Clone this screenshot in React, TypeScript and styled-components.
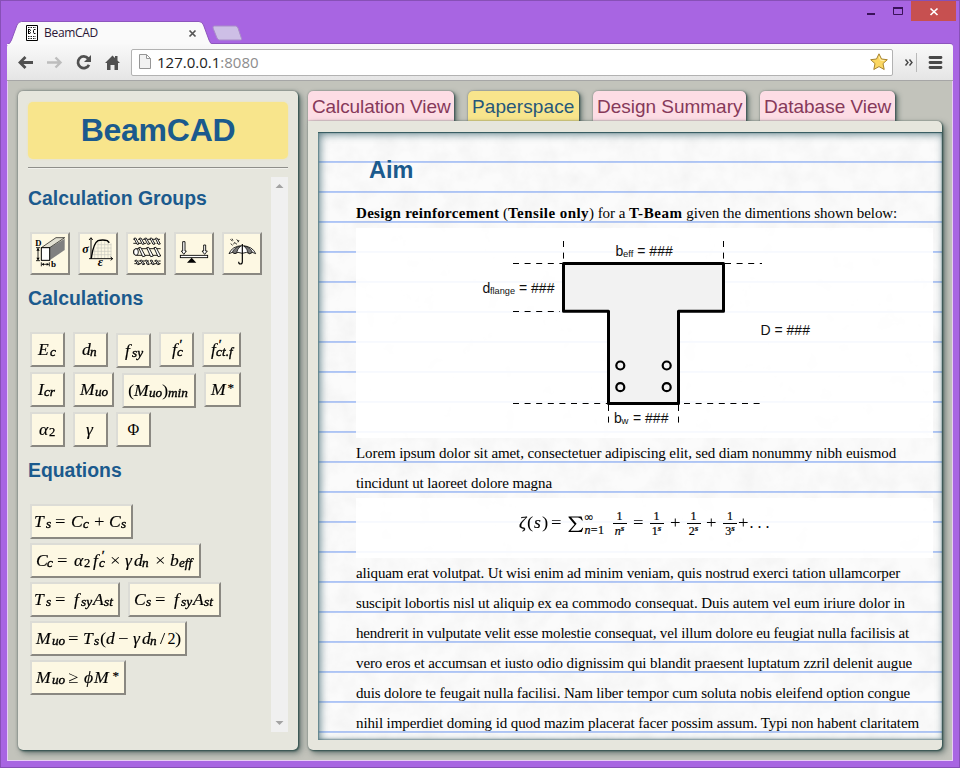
import React from "react";
import styled, { createGlobalStyle, css } from "styled-components";

const GlobalStyle = createGlobalStyle`
  html, body { margin: 0; padding: 0; }
  body { overflow: hidden; }
  *, *::before, *::after { box-sizing: border-box; }
`;

const serif = '"Liberation Serif", "Times New Roman", serif';
const sans = '"Liberation Sans", Arial, sans-serif';
const ui = '"Open Sans", "Noto Sans", sans-serif';

/* ---------- browser window ---------- */

const Window = styled.div`
  display: flex;
  flex-direction: column;
  width: 960px;
  height: 768px;
  padding: 0 7px 7px;
  background: #a865e2;
  box-shadow: inset 0 0 0 1px #8750b6;
`;

const TitleBar = styled.div`
  display: flex;
  justify-content: space-between;
  flex: none;
  height: 44px;
`;

const TabStrip = styled.div`
  display: flex;
  padding-top: 20px;
`;

const BrowserTab = styled.div`
  display: flex;
  align-items: center;
  position: relative;
  width: 206px;
  height: 25px;
  padding: 1px 16px 0 19px;
`;

const TabShape = styled.svg`
  position: absolute;
  left: 0;
  top: 0;
`;

const Favicon = styled.svg`
  position: relative;
  flex: none;
`;

const TabTitle = styled.span`
  position: relative;
  flex: 1;
  margin-left: 6px;
  font: 12px/16px ${ui};
  letter-spacing: -0.3px;
  color: #2a1636;
`;

const TabClose = styled.svg`
  position: relative;
  flex: none;
`;

const NewTab = styled.svg`
  flex: none;
  margin-left: -2px;
  margin-top: 4px;
`;

const Controls = styled.div`
  display: flex;
  margin-right: -3px;
  padding-top: 1px;
`;

const ControlIcon = styled.svg`
  display: block;
`;

const CloseBox = styled.div`
  width: 45px;
  height: 20px;
  background: #c75050;
`;

const Toolbar = styled.div`
  display: flex;
  align-items: center;
  flex: none;
  height: 37px;
  border-bottom: 1px solid #a6a6a6;
  border-radius: 3px 3px 0 0;
  background: linear-gradient(#f9f9f9, #e5e5e5);
  box-shadow: 0 -1px 0 #8d55bd;
`;

const NavIcons = styled.svg`
  flex: none;
`;

const AddressBar = styled.div`
  display: flex;
  align-items: center;
  width: 762px;
  height: 27px;
  padding: 0 4px 0 7px;
  border: 1px solid #b2b2b2;
  border-radius: 2px;
  background: #fff;
`;

const Address = styled.span`
  flex: 1;
  margin-left: 6px;
  font: 15px/20px ${ui};
  color: #222;
`;

const Port = styled.span`
  color: #8d8d8d;
`;

/* ---------- page ---------- */

const Page = styled.main`
  display: flex;
  flex: 1;
  min-height: 0;
  padding: 10px 10px 10px 10px;
  gap: 10px;
  border: solid #e8cdf6;
  border-width: 0 1px 1px;
  background: #c2c3bb;
`;

const panel = css`
  background: #e6e6dd;
  box-shadow: 1px 1px 2px #2f4f4c, 3px 3px 6px rgba(35, 60, 58, 0.6), 0 0 3px rgba(50, 60, 60, 0.5);
`;

const Sidebar = styled.aside`
  display: flex;
  flex-direction: column;
  width: 280px;
  height: 659px;
  padding: 10px;
  border-radius: 5px;
  ${panel}
`;

const Brand = styled.h1`
  margin: 1px 0 0;
  height: 57px;
  border-radius: 5px;
  background: #f8e58c;
  box-shadow: 0 0 2px rgba(248, 229, 140, 0.7);
  color: #1b5a8d;
  font: bold 32px/57px ${sans};
  letter-spacing: -0.25px;
  text-align: center;
`;

const Rule = styled.div`
  margin-top: 8px;
  height: 2px;
  border-top: 1px solid #8f8f8a;
  border-bottom: 1px solid #f1f1ec;
`;

const Scroller = styled.div`
  display: flex;
  margin-top: 8px;
  height: 555px;
`;

const ScrollContent = styled.div`
  flex: 1;
  padding-top: 9px;
`;

const ScrollTrack = styled.div`
  display: flex;
  flex-direction: column;
  justify-content: space-between;
  width: 17px;
  background: #f0f0f0;
`;

const SectionTitle = styled.h2`
  margin: 0 0 22px;
  color: #1b5a8d;
  font: bold 19.4px/24px ${sans};
`;

const Rows = styled.div<{ $gap: number }>`
  display: flex;
  flex-direction: column;
  gap: ${(p) => p.$gap}px;
  margin: 0 0 11px 2px;
`;

const Row = styled.div`
  display: flex;
  gap: 8px;
`;

const KeyButton = styled.button<{ $w: number; $h?: number; $drop?: boolean }>`
  display: flex;
  flex: none;
  width: ${(p) => p.$w}px;
  height: ${(p) => p.$h ?? 35}px;
  margin: 0 0 ${(p) => (p.$drop ? -1 : 0)}px;
  padding: 0;
  transform: translateY(${(p) => (p.$drop ? 1 : 0)}px);
  border: 2px solid;
  border-color: #dcdcd6 #8a8881 #8a8881 #dcdcd6;
  background: #fdf8e3;
  color: #000;
  overflow: hidden;
`;

/* ---------- formulas ---------- */

type Kind = "v" | "r" | "s" | "n" | "p" | "a" | "x";
type Piece = [string, Kind, number];

const glyphKinds = {
  v: css`font: italic 16px/30px ${serif}; -webkit-text-stroke: 0.15px #000; transform: scaleX(1.1);`,
  r: css`font: 16px/30px ${serif};`,
  x: css`font: 17px/30px ${serif}; transform: scaleX(1.1);`,
  s: css`font: italic 11.5px/35px ${serif}; -webkit-text-stroke: 0.35px #000; transform: scaleX(1.15);`,
  n: css`font: 11.5px/35px ${serif}; -webkit-text-stroke: 0.25px #000; transform: scaleX(1.1);`,
  p: css`font: italic 13px/18px ${serif}; -webkit-text-stroke: 0.4px #000;`,
  a: css`font: 13px/26px ${serif}; -webkit-text-stroke: 0.2px #000;`,
};

const Formula = styled.span<{ $start: number; $dy?: number }>`
  display: flex;
  align-items: flex-start;
  margin-left: ${(p) => p.$start - 2}px;
  margin-top: ${(p) => p.$dy ?? 0}px;
`;

const Glyph = styled.span<{ $kind: Kind; $w: number }>`
  display: block;
  flex: none;
  width: ${(p) => p.$w}px;
  white-space: nowrap;
  transform-origin: left center;
  text-align: left;
  ${(p) => glyphKinds[p.$kind]}
`;

function MathText({ pieces, dy }: { pieces: Piece[]; dy?: number }) {
  return (
    <Formula $start={pieces[0][2]} $dy={dy}>
      {pieces.map(([text, kind, x], i) => (
        <Glyph key={i} $kind={kind} $w={i + 1 < pieces.length ? pieces[i + 1][2] - x : 10}>
          {text}
        </Glyph>
      ))}
    </Formula>
  );
}

type Key = { w: number; drop?: boolean; pieces: Piece[] };

const calculations: Key[][] = [
  [
    { w: 35, pieces: [["E", "v", 7.5], ["c", "s", 19.5]] },
    { w: 35, pieces: [["d", "v", 8.5], ["n", "s", 17]] },
    { w: 35, drop: true, pieces: [["f", "v", 8.5], ["sy", "s", 15.5]] },
    { w: 35, pieces: [["f", "v", 12.5], ["c", "s", 17.5], ["′", "p", 19.8]] },
    { w: 39, pieces: [["f", "v", 8.5], ["c", "s", 14], ["′", "p", 16], ["t.f", "s", 20]] },
  ],
  [
    { w: 35, pieces: [["I", "v", 7.7], ["cr", "s", 14.3]] },
    { w: 41, pieces: [["M", "v", 6.5], ["uo", "s", 22.3]] },
    { w: 74, drop: true, pieces: [["(", "x", 5.5], ["M", "v", 11.5], ["uo", "s", 27.3], [")", "x", 40], ["min", "s", 46.3]] },
    { w: 37, pieces: [["M", "v", 6.5], ["*", "a", 23.5]] },
  ],
  [
    { w: 35, pieces: [["α", "v", 8.5], ["2", "n", 18.5]] },
    { w: 35, pieces: [["γ", "v", 13]] },
    { w: 35, pieces: [["Φ", "r", 11.5]] },
  ],
];

const equations: Key[][] = [
  [{ w: 103, pieces: [["T", "v", 4], ["s", "s", 15.5], ["=", "x", 25], ["C", "v", 41], ["c", "s", 52.5], ["+", "x", 63.5], ["C", "v", 79], ["s", "s", 91]] }],
  [{ w: 171, pieces: [["C", "v", 5.5], ["c", "s", 17], ["=", "x", 27], ["α", "v", 43.5], ["2", "n", 53.5], ["f", "v", 63], ["c", "s", 68.5], ["′", "p", 71], ["×", "x", 80], ["γ", "v", 95], ["d", "v", 103.5], ["n", "s", 112], ["×", "x", 125], ["b", "v", 140], ["eff", "s", 149]] }],
  [
    { w: 90, pieces: [["T", "v", 4], ["s", "s", 15.5], ["=", "x", 25], ["f", "v", 43.5], ["sy", "s", 50.5], ["A", "v", 62.5], ["st", "s", 74]] },
    { w: 93, pieces: [["C", "v", 6], ["s", "s", 17.5], ["=", "x", 27], ["f", "v", 45.5], ["sy", "s", 52.5], ["A", "v", 64.5], ["st", "s", 76]] },
  ],
  [{ w: 157, pieces: [["M", "v", 6], ["uo", "s", 21.8], ["=", "x", 38], ["T", "v", 53], ["s", "s", 64.5], ["(", "x", 70], ["d", "v", 76.5], ["−", "x", 88.5], ["γ", "v", 103], ["d", "v", 112], ["n", "s", 120.5], ["/", "x", 130.5], ["2", "r", 137.5], [")", "x", 145.5]] }],
  [{ w: 96, pieces: [["M", "v", 6], ["uo", "s", 21.8], ["≥", "x", 38.5], ["ϕ", "v", 54], ["M", "v", 64.5], ["*", "a", 82.5]] }],
];

function KeyRows({ rows, gap }: { rows: Key[][]; gap: number }) {
  return (
    <Rows $gap={gap}>
      {rows.map((row, i) => (
        <Row key={i}>
          {row.map((k, j) => (
            <KeyButton key={j} $w={k.w} $drop={k.drop}>
              <MathText pieces={k.pieces} dy={1} />
            </KeyButton>
          ))}
        </Row>
      ))}
    </Rows>
  );
}

/* ---------- group icons ---------- */

const GroupIcon = styled.svg`
  display: block;
  flex: none;
  margin: -2px;
`;

const SectionIcon = () => (
  <GroupIcon width="40" height="43" viewBox="30 156 120 129">
    <path d="M89 203L134 176V210L89 241Z" fill="#808080" />
    <path d="M64 203L108 173H134L89 203Z" fill="#e2e0d2" stroke="#000" strokeWidth="2" />
    <rect x="64" y="203" width="25" height="38" fill="#fff" stroke="#000" strokeWidth="3" />
    <path d="M54 204V241M48 203H60M48 242H60M64 247V259M88 247V259M66 253H86" stroke="#000" strokeWidth="2.5" />
    <path d="M54 204l-5 8h10zM54 241l-5-8h10zM65 253l7-4v8zM87 253l-7-4v8z" />
    <text x="46" y="199" fontFamily={serif} fontSize="26" fontWeight="bold">D</text>
    <text x="93" y="261" fontFamily={serif} fontSize="27" fontWeight="bold">b</text>
  </GroupIcon>
);

const StressIcon = () => (
  <GroupIcon width="40" height="43" viewBox="174 156 120 129">
    <path d="M222 214H274M217 224H274M228 204H274M232 194H274M234 184V235M244 184V235M254 184V235M264 184V235M273 190V235M224 205V235" stroke="#c9c8c0" strokeWidth="2" />
    <path d="M213 174V237M207 236H278M207 180l6-7 5 7M272 231l6 5-6 5" fill="none" stroke="#000" strokeWidth="2.8" />
    <path d="M214 235Q220 190 234 182Q248 178 262 182L268 188" fill="none" stroke="#000" strokeWidth="4" />
    <text x="187" y="220" fontFamily={serif} fontSize="36" fontStyle="italic" fontWeight="bold">σ</text>
    <text x="233" y="259" fontFamily={serif} fontSize="38" fontStyle="italic" fontWeight="bold">ε</text>
  </GroupIcon>
);

const RopeIcon = () => (
  <GroupIcon width="40" height="43" viewBox="318 156 120 129">
    <g fill="#fff" stroke="#000" strokeWidth="2.6">
      <path d="M340 178H422M340 190H422" strokeDasharray="10 4" />
      {[342, 358, 374, 390, 406].map((x) => (
        <path key={x} d={`M${x} 175l5-1 10 18-6 1z`} />
      ))}
      <path d="M422 206H350Q340 207 340 216Q340 225 350 226H422" fill="#fdf8e3" />
      <ellipse cx="348" cy="216" rx="7" ry="10" />
      {[356, 380, 402].map((x) => (
        <path key={x} d={`M${x} 203l6-1 14 26-8 2z`} />
      ))}
      <path d="M343 243H422M343 251H422" strokeDasharray="8 4" />
      {[346, 361, 376, 391, 406].map((x) => (
        <path key={x} d={`M${x} 241l4-1 8 13-5 1z`} />
      ))}
    </g>
  </GroupIcon>
);

const BalanceIcon = () => (
  <GroupIcon width="40" height="43" viewBox="462 156 120 129">
    <g fill="#fff" stroke="#000" strokeWidth="2.6">
      <path d="M488 185H495V213H499L491.500 223L484 213H488Z" />
      <path d="M551 195H557V213H562L554 223L546 213H551Z" />
      <rect x="481" y="226" width="82" height="7" />
    </g>
    <path d="M515 233L529 248H501Z" />
  </GroupIcon>
);

const UmbrellaIcon = () => (
  <GroupIcon width="40" height="43" viewBox="606 156 120 129">
    <path d="M627 221Q636 198 667 197Q698 199 707 221L697 217L689 221L680 217L667 220L654 217L645 221L637 217Z" fill="#fff" stroke="#000" strokeWidth="2.5" />
    <path d="M637 217Q642 202 662 198Q652 207 650 218L645 221ZM697 217Q692 202 672 198Q682 207 684 218L689 221Z" fill="#777" stroke="#000" strokeWidth="2" />
    <path d="M667 192V245Q667 252 661 252Q656 252 656 245" fill="none" stroke="#000" strokeWidth="3.5" />
    <path d="M631 178l6 5M636 176l3 6M643 187l8 6M650 178l5 7M657 180l-3 7M632 191l6 5M641 193l2-5" fill="none" stroke="#000" strokeWidth="2.3" />
  </GroupIcon>
);

/* ---------- workspace ---------- */

const Workspace = styled.section`
  display: flex;
  flex-direction: column;
  width: 634px;
  height: 659px;
`;

const Tabs = styled.nav`
  display: flex;
  gap: 14px;
  height: 30px;
`;

const Tab = styled.div<{ $w: number; $active?: boolean; $ls: number }>`
  width: ${(p) => p.$w}px;
  padding-left: 4px;
  border-radius: 5px 5px 0 0;
  background: ${(p) => (p.$active ? "#f8e58c" : "#fddde5")};
  color: ${(p) => (p.$active ? "#26577a" : "#86395a")};
  box-shadow: 1px 1px 2px #3c5553, 3px 2px 5px rgba(35, 60, 58, 0.55), 0 0 2px rgba(50, 60, 60, 0.4);
  font: 19px/31px ${sans};
  letter-spacing: ${(p) => p.$ls}px;
  white-space: nowrap;
`;

const Board = styled.div`
  position: relative;
  height: 629px;
  padding: 11px 0 10px 10px;
  border-radius: 0 5px 5px 5px;
  ${panel}
  box-shadow: 1px 1px 2px #2f4f4c, 3px 3px 6px rgba(35, 60, 58, 0.6), 0 0 2px rgba(50, 60, 60, 0.45);
`;

const Paper = styled.article`
  position: relative;
  height: 608px;
  padding: 22px 9px 0 38px;
  overflow: hidden;
  background-color: #fbfbfb;
  background-image: linear-gradient(transparent 28px, #a9c1f5 28px, #b9cdf7 30px);
  background-size: 100% 30px;
  background-position: 0 1px;
  color: #000;
`;

const PaperShade = styled.div`
  position: absolute;
  inset: 0;
  box-shadow: inset 0 1px 1px #33595c, inset 1px 0 1px #6d8f96, inset 2px 2px 9px rgba(45, 90, 100, 0.75), inset 0 -1px 2px rgba(60, 90, 95, 0.5);
`;

const PaperTexture = styled.svg`
  position: absolute;
  inset: 0;
`;

const PaperTitle = styled.h2`
  position: relative;
  margin: 0 0 12px 13px;
  color: #1b5a8d;
  font: bold 23.5px/32px ${sans};
`;

const Line = styled.div<{ $ls: number }>`
  position: relative;
  height: 30px;
  font: 15px/30px ${serif};
  letter-spacing: ${(p) => p.$ls}px;
  white-space: pre;
`;

const Strong = styled.b<{ $ls: number }>`
  letter-spacing: ${(p) => p.$ls}px;
`;

const Figure = styled.div<{ $h: number }>`
  position: relative;
  display: flex;
  height: ${(p) => p.$h}px;
  background: rgba(255, 255, 255, 0.9);
`;

const Zeta = styled.div`
  display: flex;
  align-items: flex-start;
  height: 60px;
`;

const Offset = styled.div<{ $w: number; $top?: number }>`
  flex: none;
  width: ${(p) => p.$w}px;
  margin-top: ${(p) => p.$top ?? 10}px;
  white-space: nowrap;
`;

const Fraction = styled.span<{ $w: number; $after: number }>`
  display: flex;
  flex-direction: column;
  align-items: center;
  flex: none;
  width: ${(p) => p.$w}px;
  margin: 12px ${(p) => p.$after}px 0 0;
  font: 12px/13px ${serif};
  -webkit-text-stroke: 0.2px #000;
`;

const Denominator = styled.span`
  display: flex;
  width: 100%;
  justify-content: center;
  height: 14px;
  border-top: 1px solid #000;
  line-height: 14px;
`;

const Exponent = styled.i`
  font-size: 9px;
  line-height: 9px;
  font-weight: bold;
`;

const Limits = styled.span`
  display: flex;
  flex-direction: column;
  flex: none;
  width: 28px;
  margin-top: 13px;
  font: 12px/13px ${serif};
  -webkit-text-stroke: 0.2px #000;
  letter-spacing: 0.3px;
  white-space: nowrap;
`;

const Frac = ({ den, after, italic }: { den: string; after: number; italic?: boolean }) => (
  <Fraction $w={14} $after={after}>
    1
    <Denominator>
      {italic ? <i>{den}</i> : den}
      <Exponent>s</Exponent>
    </Denominator>
  </Fraction>
);

const sigma = (
  <svg width="16" height="17" viewBox="0 0 16 17">
    <path d="M0.500 0.500H13.500L14.800 4.500H14Q13 1.800 10 1.500H3.200L8.600 7.800L2.600 14.800H10.300Q13.300 14.500 14.500 11.800H15.200L13.800 16H0.500V15.200L6.500 8.500L0.500 1.300Z" />
  </svg>
);

const Diagram = () => (
  <svg width="577" height="210" viewBox="356 228 577 210">
    <path d="M563.500 263.500H723.500V311.300H678.500V403.500H608.500V311.300H563.500Z" fill="#f2f2f2" stroke="#000" strokeWidth="3" strokeLinejoin="round" />
    <g stroke="#000" strokeWidth="1" strokeDasharray="6 5.6" fill="none">
      <path d="M513 263.500H562M725 263.500H762M513 311.500H560M513 403.500H607M684 403.500H762" />
      <path d="M563.500 241V262M723.500 241V262M608.500 405V423M678.500 405V423" />
    </g>
    <g stroke="#000" strokeWidth="2.2" fill="#f2f2f2">
      <circle cx="620.300" cy="365.500" r="4" />
      <circle cx="666.700" cy="365.500" r="4" />
      <circle cx="620.300" cy="387.200" r="4" />
      <circle cx="666.700" cy="387.200" r="4" />
    </g>
    <g fontFamily={sans} fontSize="14" fill="#111">
      <text x="615.500" y="256">b</text>
      <text x="623" y="257" fontSize="9.500">eff</text>
      <text x="637.300" y="256">= ###</text>
      <text x="482.500" y="293">d</text>
      <text x="490" y="294" fontSize="9.200">flange</text>
      <text x="519" y="293">= ###</text>
      <text x="760.500" y="335">D = ###</text>
      <text x="614" y="423">b</text>
      <text x="621.500" y="424" fontSize="9.500">w</text>
      <text x="633" y="423">= ###</text>
    </g>
  </svg>
);

const paragraphTop: [string, number][] = [
  ["Lorem ipsum dolor sit amet, consectetuer adipiscing elit, sed diam nonummy nibh euismod", -0.094],
  ["tincidunt ut laoreet dolore magna", -0.094],
];

const paragraphBottom: [string, number][] = [
  ["aliquam erat volutpat. Ut wisi enim ad minim veniam, quis nostrud exerci tation ullamcorper", -0.142],
  ["suscipit lobortis nisl ut aliquip ex ea commodo consequat. Duis autem vel eum iriure dolor in", -0.109],
  ["hendrerit in vulputate velit esse molestie consequat, vel illum dolore eu feugiat nulla facilisis at", -0.189],
  ["vero eros et accumsan et iusto odio dignissim qui blandit praesent luptatum zzril delenit augue", -0.11],
  ["duis dolore te feugait nulla facilisi. Nam liber tempor cum soluta nobis eleifend option congue", -0.127],
  ["nihil imperdiet doming id quod mazim placerat facer possim assum. Typi non habent claritatem", -0.105],
];

export default function App() {
  return (
    <>
      <GlobalStyle />
      <Window>
        <TitleBar>
          <TabStrip>
            <BrowserTab>
              <TabShape width="206" height="25" viewBox="0 0 206 25">
                <path d="M0 25Q3 24 4.500 20L10 5Q11.500 1.500 14.500 1.500H192Q195 1.500 196.500 5L202 20Q203.500 24 206 25Z" fill="#fafafa" stroke="#8d55bd" />
                <path d="M0 24.500H206" stroke="#f9f9f9" />
              </TabShape>
              <Favicon width="12" height="16" viewBox="0 0 12 16">
                <path d="M0.500 0.500H11.500V15.500H0.500Z" fill="#fff" stroke="#000" />
                <path d="M2.500 4V9M2.500 4.500H4L4.500 5.500L3.500 6.500L4.500 7.500L4 8.500H2.500M9.500 4.500H8L7.500 5.500V7.500L8 8.500H9.500" fill="none" stroke="#000" />
                <path d="M2 11.500H10M2 13.500H10M2 2.500H10" stroke="#222" strokeDasharray="1.500 1" />
              </Favicon>
              <TabTitle>BeamCAD</TabTitle>
              <TabClose width="9" height="9" viewBox="0 0 9 9">
                <path d="M1.500 1.500L7.500 7.500M7.500 1.500L1.500 7.500" stroke="#555" strokeWidth="1.700" />
              </TabClose>
            </BrowserTab>
            <NewTab width="34" height="18" viewBox="0 0 34 18">
              <path d="M3.500 2H24.500Q26 2 27 4L30.500 14.500Q31 16 29.500 16H8.500Q7 16 6 14L2 4Q1.500 2 3.500 2Z" fill="#cdbfe6" stroke="#a98cc9" />
            </NewTab>
          </TabStrip>
          <Controls>
            <ControlIcon width="54" height="20" viewBox="857 1 54 20">
              <path d="M867 14H875" stroke="#3a1259" strokeWidth="2" />
              <path d="M893.500 8H902.500V14.500H893.500Z" fill="none" stroke="#3a1259" />
              <path d="M893 8H903" stroke="#3a1259" strokeWidth="2" />
            </ControlIcon>
            <CloseBox>
              <ControlIcon width="45" height="20" viewBox="911 1 45 20">
                <path d="M930.500 8.500L937.500 15M937.500 8.500L930.500 15" stroke="#fff" strokeWidth="1.700" />
              </ControlIcon>
            </CloseBox>
          </Controls>
        </TitleBar>

        <Toolbar>
          <NavIcons width="124" height="36" viewBox="7 44 124 36">
            <path d="M20 62.500H33M25.500 57L20 62.500L25.500 68" fill="none" stroke="#505050" strokeWidth="2.800" />
            <path d="M47 62.500H60.500M55.500 57.500L60.500 62.500L55.500 67.500" fill="none" stroke="#bdbdbd" strokeWidth="2.400" />
            <path d="M88.200 58.500A5.800 5.800 0 1 0 89 64.800" fill="none" stroke="#505050" strokeWidth="2.700" />
            <path d="M91 55V62H84Z" fill="#505050" />
            <path d="M105 63L112.500 55.500L115 58V56H117.500V60.500L120 63H118V70H114.500V65H110.500V70H107V63Z" fill="#505050" />
          </NavIcons>
          <AddressBar>
            <svg width="12" height="16" viewBox="0 0 12 16">
              <path d="M0.500 0.500H7.500L11.500 4.500V14.500H0.500ZM7.500 0.500V4.500H11.500" fill="#f2f2f2" stroke="#969696" />
            </svg>
            <Address>
              127.0.0.1<Port>:8080</Port>
            </Address>
            <svg width="18" height="18" viewBox="0 0 18 18">
              <path d="M9 0.800L11.500 6L17.300 6.700L13 10.600L14.200 16.500L9 13.600L3.800 16.500L5 10.600L0.700 6.700L6.500 6Z" fill="#fbd762" stroke="#a8842f" strokeLinejoin="round" />
              <path d="M9 3.500L10.500 7.200L14.500 7.600" fill="none" stroke="#fff0b0" />
            </svg>
          </AddressBar>
          <NavIcons width="59" height="36" viewBox="893 44 59 36">
            <path d="M905.500 59.500L908 62.500L905.500 65.500M909.500 59.500L912 62.500L909.500 65.500" fill="none" stroke="#444" strokeWidth="1.400" />
            <path d="M916.500 53V72" stroke="#b9b9b9" />
            <path d="M930 57.500H941M930 62.500H941M930 67.500H941" stroke="#484848" strokeWidth="2.800" strokeLinecap="round" />
          </NavIcons>
        </Toolbar>

        <Page>
          <Sidebar>
            <Brand>BeamCAD</Brand>
            <Rule />
            <Scroller>
              <ScrollContent>
                <SectionTitle>Calculation Groups</SectionTitle>
                <Rows $gap={0}>
                  <Row>
                    {[SectionIcon, StressIcon, RopeIcon, BalanceIcon, UmbrellaIcon].map((Icon, i) => (
                      <KeyButton key={i} $w={40} $h={43}>
                        <Icon />
                      </KeyButton>
                    ))}
                  </Row>
                </Rows>
                <SectionTitle>Calculations</SectionTitle>
                <KeyRows rows={calculations} gap={5} />
                <SectionTitle>Equations</SectionTitle>
                <KeyRows rows={equations} gap={4} />
              </ScrollContent>
              <ScrollTrack>
                <svg width="17" height="17" viewBox="0 0 17 17">
                  <path d="M4.500 11L8.500 7L12.500 11Z" fill="#a3a3a3" />
                </svg>
                <svg width="17" height="17" viewBox="0 0 17 17">
                  <path d="M4.500 6L8.500 10L12.500 6Z" fill="#a3a3a3" />
                </svg>
              </ScrollTrack>
            </Scroller>
          </Sidebar>

          <Workspace>
            <Tabs>
              <Tab $w={146} $ls={-0.1}>Calculation View</Tab>
              <Tab $w={111} $ls={0.1} $active>Paperspace</Tab>
              <Tab $w={153} $ls={-0.02}>Design Summary</Tab>
              <Tab $w={135} $ls={-0.02}>Database View</Tab>
            </Tabs>
            <Board>
              <Paper>
                <PaperTexture width="624" height="608">
                  <filter id="grain" x="0" y="0" width="100%" height="100%">
                    <feTurbulence type="fractalNoise" baseFrequency="0.05" numOctaves="4" seed="4" />
                    <feColorMatrix values="0 0 0 0 0.5  0 0 0 0 0.5  0 0 0 0 0.5  0.2 0 0 0 -0.07" />
                  </filter>
                  <rect width="624" height="608" filter="url(#grain)" />
                </PaperTexture>
                <PaperShade />
                <PaperTitle>Aim</PaperTitle>
                <Line $ls={-0.07}>
                  <Strong $ls={0.3}>Design reinforcement</Strong> (<Strong $ls={0.45}>Tensile only</Strong>) for a{" "}
                  <Strong $ls={0.55}>T-Beam</Strong> given the dimentions shown below:
                </Line>
                <Figure $h={210}>
                  <Diagram />
                </Figure>
                {paragraphTop.map(([text, ls]) => (
                  <Line key={text} $ls={ls}>{text}</Line>
                ))}
                <Figure $h={60}>
                  <Zeta>
                    <Offset $w={163} />
                    <Offset $w={49}>
                      <MathText pieces={[["ζ", "v", 2], ["(", "x", 10], ["s", "v", 17], [")", "x", 24.5], ["=", "x", 33.5]]} />
                    </Offset>
                    <Offset $w={16.5} $top={17.5}>{sigma}</Offset>
                    <Limits>
                      <span>∞</span>
                      <span><i>n</i>=1</span>
                    </Limits>
                    <Frac den="n" italic after={6.5} />
                    <Offset $w={16.5}><MathText pieces={[["=", "x", 1.5]]} /></Offset>
                    <Frac den="1" after={6.5} />
                    <Offset $w={16.5}><MathText pieces={[["+", "x", 1.5]]} /></Offset>
                    <Frac den="2" after={6} />
                    <Offset $w={16.5}><MathText pieces={[["+", "x", 1.5]]} /></Offset>
                    <Frac den="3" after={2} />
                    <Offset $w={30}><MathText pieces={[["+", "x", 1], [". . .", "r", 12.5]]} /></Offset>
                  </Zeta>
                </Figure>
                {paragraphBottom.map(([text, ls]) => (
                  <Line key={text} $ls={ls}>{text}</Line>
                ))}
              </Paper>
            </Board>
          </Workspace>
        </Page>
      </Window>
    </>
  );
}
